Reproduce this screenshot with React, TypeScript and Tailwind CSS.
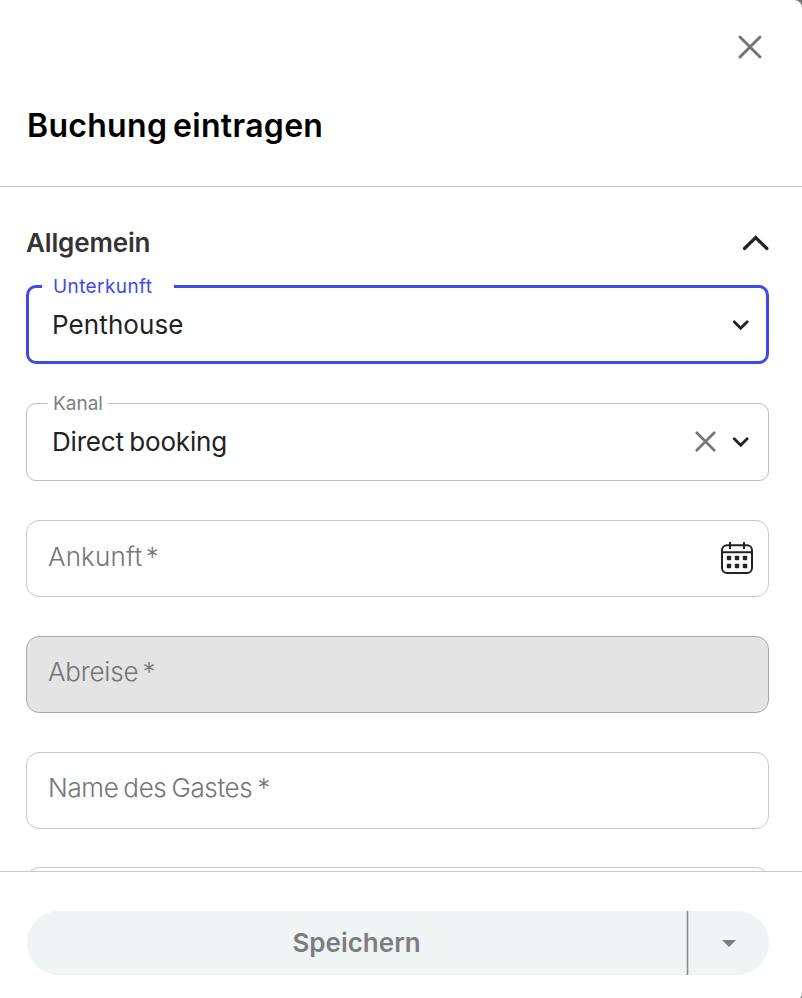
import { useState, type ReactNode } from 'react';

function CloseIcon({ className }: { className: string }) {
  return (
    <svg className={className} viewBox="0 0 24 24" fill="none" stroke="currentColor">
      <path strokeLinecap="round" strokeWidth={3} d="M2 2l20 20M22 2L2 22" />
    </svg>
  );
}

function ChevronDown() {
  return (
    <svg className="h-3 w-[18px] text-[#222]" viewBox="0 0 18 12" fill="none" stroke="currentColor">
      <path strokeLinecap="round" strokeWidth={2.8} d="M2.2 2.7L8.7 9.3l6.5-6.6" />
    </svg>
  );
}

function CalendarIcon() {
  return (
    <svg className="h-8 w-8 text-[#222]" viewBox="0 0 32 32" fill="none" stroke="currentColor">
      <rect x="1" y="3.2" width="30" height="27.8" rx="5" strokeWidth={2} />
      <path strokeWidth={2} d="M1 10.3h30M9 0v7M23 0v7" />
      <g fill="currentColor" stroke="none">
        <rect x="5.8" y="13.8" width="4.4" height="4.4" rx="1" />
        <rect x="13.8" y="13.8" width="4.4" height="4.4" rx="1" />
        <rect x="21.8" y="13.8" width="4.4" height="4.4" rx="1" />
        <rect x="5.8" y="21.8" width="4.4" height="4.4" rx="1" />
        <rect x="13.8" y="21.8" width="4.4" height="4.4" rx="1" />
        <rect x="21.8" y="21.8" width="4.4" height="4.4" rx="1" />
      </g>
    </svg>
  );
}

interface FieldProps {
  label?: string;
  disabled?: boolean;
  className?: string;
  children?: ReactNode;
}

function Field({ label, disabled, className = '', children }: FieldProps) {
  return (
    <div
      className={`flex h-[77px] shrink-0 items-center justify-between rounded-[13px] border pl-[21px] pr-[15px] ${className} ${
        disabled ? 'border-[#a8a8a8] bg-[#e4e4e4]' : 'border-[#c8c8c8]'
      }`}
    >
      {label && <span className="text-[26px] font-light text-[#757575]">{label}</span>}
      {children}
    </div>
  );
}

export default function App() {
  const [open, setOpen] = useState(true);
  const [channel, setChannel] = useState('Direct booking');

  return (
    <div className="h-[998px] w-[802px] overflow-hidden bg-[#757575] font-['Inter',sans-serif]">
      <div className="flex h-[1001px] flex-col rounded-r-[8px] bg-white">
        <header className="flex h-[187px] shrink-0 flex-col border-b border-[#c8c8c8] pl-[27px] pr-10">
          <button className="mt-[35px] self-end" aria-label="Schließen">
            <CloseIcon className="h-6 w-6 text-[#757575]" />
          </button>
          <h1 className="mt-[46px] text-[32px] leading-[42px] font-semibold tracking-[0.3px] text-black [word-spacing:-2.5px]">
            Buchung eintragen
          </h1>
        </header>

        <main className="flex h-[684px] shrink-0 flex-col overflow-hidden pl-[26px] pr-[33px]">
          <button
            className="mt-[36px] flex h-10 shrink-0 items-center justify-between"
            onClick={() => setOpen(!open)}
          >
            <span className="text-[26px] leading-10 font-semibold tracking-[-0.15px] text-[#333]">Allgemein</span>
            <svg className="h-4 w-[27px] text-[#222]" viewBox="0 0 27 16" fill="none" stroke="currentColor">
              <path strokeLinecap="round" strokeWidth={3.2} d="M2.5 13.5L13.7 2.6l11.2 10.9" />
            </svg>
          </button>

          {open && (
            <div className="mt-[22px] flex flex-col">
              <fieldset className="h-[79px] shrink-0 rounded-[10px] border-3 border-[#404aec]">
                <legend className="ml-[13px] flex h-0 w-[132px] items-center pl-[11px] text-[19px] leading-none tracking-[0.4px] text-[#404aec]">
                  Unterkunft
                </legend>
                <div className="flex h-[73px] items-center justify-between pl-[23px] pr-[16px]">
                  <span className="text-[26px] tracking-[0.1px] text-[#222]">Penthouse</span>
                  <ChevronDown />
                </div>
              </fieldset>

              <fieldset className="mt-[39px] h-[78px] shrink-0 rounded-[10px] border border-[#bdbdbd]">
                <legend className="ml-[21px] flex h-0 w-[60px] items-center pl-[5px] text-[19px] leading-none text-[#808080]">
                  Kanal
                </legend>
                <div className="flex h-[76px] items-center justify-between pb-px pl-[25px] pr-[18px]">
                  <span className="text-[26px] tracking-[-0.2px] text-[#222] [word-spacing:-1.5px]">{channel}</span>
                  <span className="flex items-center gap-4">
                    <button onClick={() => setChannel('')} aria-label="Löschen">
                      <CloseIcon className="h-[21px] w-[21px] text-[#757575]" />
                    </button>
                    <ChevronDown />
                  </span>
                </div>
              </fieldset>

              <Field label="Ankunft *" className="mt-[39px] pb-[4px] tracking-[0.15px] [word-spacing:-4px]">
                <span className="pt-[3px]">
                  <CalendarIcon />
                </span>
              </Field>
              <Field label="Abreise *" disabled className="mt-[39px] pb-[6px] tracking-[-0.2px] [word-spacing:-3px]" />
              <Field label="Name des Gastes *" className="mt-[39px] pb-[6px] tracking-[-0.35px] [word-spacing:-2px]" />
              <Field className="mt-[38px]" />
            </div>
          )}
        </main>

        <footer className="flex flex-1 flex-col border-t border-[#c8c8c8] pt-[39px] pl-[27px] pr-[33px]">
          <div className="flex h-16 overflow-hidden rounded-full bg-[#f0f4f5] text-[#7d7d7d]">
            <button className="w-[659px] pb-px text-[26px] font-semibold">Speichern</button>
            <span className="w-[3px] border-x border-[#d3d6d7] bg-[#8c8c8c]" />
            <button className="flex flex-1 items-center justify-center" aria-label="Weitere Optionen">
              <svg className="h-[7px] w-[14px]" viewBox="0 0 14 7" fill="currentColor">
                <path d="M0 0h14L7 7z" />
              </svg>
            </button>
          </div>
        </footer>
      </div>
    </div>
  );
}
